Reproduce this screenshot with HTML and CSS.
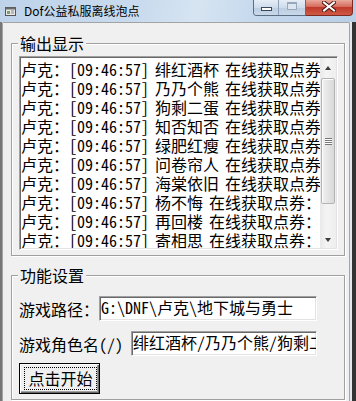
FILE: index.html
```html
<!DOCTYPE html>
<html lang="zh-CN">
<head>
  <meta charset="UTF-8" />
  <meta name="viewport" content="width=device-width, initial-scale=1.0"/>
  <title>Dof公益私服离线泡点</title>
  <link rel="stylesheet" href="styles.css">
</head>
<body>

<div class="window">
  <div class="titlebar">
    <svg class="app-icon" width="11" height="10" viewBox="0 0 11 10">
      <rect x="0.5" y="1.5" width="10" height="8" fill="#e8e8e8" stroke="#555"/>
      <rect x="0.5" y="1.5" width="10" height="2" fill="#6b6b6b"/>
      <rect x="2" y="5" width="3" height="3" fill="#7aa06a"/>
      <path d="M6 5h3M6 7h3" stroke="#888"/>
    </svg>
    <span class="title">Dof公益私服离线泡点</span>
    <div class="caption-buttons">
      <div class="cap-group">
        <div class="cap-btn min"><span class="min-glyph"></span></div>
        <div class="cap-btn max"><span class="max-glyph"></span></div>
      </div>
      <div class="cap-btn close">
        <svg width="14" height="11" viewBox="0 0 14 11">
          <path d="M2 1.5L12 9.5M12 1.5L2 9.5" stroke="#4a1510" stroke-width="4" stroke-linecap="square"/>
          <path d="M2 1.5L12 9.5M12 1.5L2 9.5" stroke="#fff" stroke-width="2" stroke-linecap="square"/>
        </svg>
      </div>
    </div>
  </div>

  <div class="frame">
    <div class="edge-left"></div>
    <div class="client">
      <!-- log output -->
      <fieldset class="group output">
        <legend>输出显示</legend>
        <div class="listbox">
          <div class="list-items">
            <div class="list-item">卢克：[09:46:57] 绯红酒杯 在线获取点券</div>
            <div class="list-item">卢克：[09:46:57] 乃乃个熊 在线获取点券</div>
            <div class="list-item">卢克：[09:46:57] 狗剩二蛋 在线获取点券</div>
            <div class="list-item">卢克：[09:46:57] 知否知否 在线获取点券</div>
            <div class="list-item">卢克：[09:46:57] 绿肥红瘦 在线获取点券</div>
            <div class="list-item">卢克：[09:46:57] 问卷帘人 在线获取点券</div>
            <div class="list-item">卢克：[09:46:57] 海棠依旧 在线获取点券</div>
            <div class="list-item">卢克：[09:46:57] 杨不悔 在线获取点券：</div>
            <div class="list-item">卢克：[09:46:57] 再回楼 在线获取点券：</div>
            <div class="list-item">卢克：[09:46:57] 寄相思 在线获取点券：</div>
          </div>
          <div class="scrollbar">
            <div class="sb-arrow up"></div>
            <div class="sb-track">
              <div class="sb-thumb"><span class="grip"></span></div>
            </div>
            <div class="sb-arrow down"></div>
          </div>
        </div>
      </fieldset>

      <!-- settings -->
      <fieldset class="group settings">
        <legend>功能设置</legend>
        <div class="field-row">
          <label class="field-label path-label">游戏路径：</label>
          <div class="textbox">G:\DNF\卢克\地下城与勇士</div>
        </div>
        <div class="field-row">
          <label class="field-label role-label">游戏角色名(/)</label>
          <div class="textbox">绯红酒杯/乃乃个熊/狗剩二</div>
        </div>
        <button class="start-btn"><span>点击开始</span></button>
      </fieldset>
    </div>
    <div class="edge-right"></div>
  </div>
</div>

</body>
</html>
```

FILE: styles.css
```css
* {
  box-sizing: border-box;
}
body {
  margin: 0;
  width: 356px;
  height: 401px;
  overflow: hidden;
  background: #f0f0f0;
  font-family: "Noto Sans Mono CJK SC", "Noto Sans CJK SC", sans-serif;
  font-size: 16px;
  color: #000;
}
.window {
  width: 356px;
  height: 401px;
  display: flex;
  flex-direction: column;
}

/* title bar */
.titlebar {
  height: 22px;
  flex: none;
  display: flex;
  align-items: flex-start;
  background: linear-gradient(100deg, #bed3ea 0%, #c9dbee 40%, #d6e4f2 55%, #c3d7ec 75%, #b9cfe8 100%);
}
.app-icon {
  margin: 6px 0 0 5px;
  flex: none;
}
.title {
  font-family: "Noto Sans CJK SC", sans-serif;
  font-size: 12px;
  line-height: 22px;
  margin-left: 8px;
  color: #000;
}
.caption-buttons {
  margin-left: auto;
  margin-right: 3px;
  display: flex;
  height: 16px;
}
.cap-group {
  display: flex;
  border: 1px solid #5b6e84;
  border-top: none;
  border-radius: 0 0 0 4px;
  overflow: hidden;
}
.cap-btn {
  height: 100%;
  display: flex;
  align-items: center;
  justify-content: center;
  background: linear-gradient(#e6edf5, #cfdceb 50%, #bccde1 51%, #c9d8e9);
}
.cap-btn.min {
  width: 25px;
  border-right: 1px solid #8da2b9;
}
.cap-btn.max {
  width: 26px;
}
.min-glyph {
  width: 11px;
  height: 4px;
  margin-top: 3px;
  background: #fff;
  border: 1px solid #39475a;
}
.max-glyph {
  width: 10px;
  height: 8px;
  margin-top: -4px;
  border: 1px solid #98a8bb;
  border-top-width: 2px;
  background: #dde6f0;
}
.cap-btn.close {
  width: 47px;
  border: 1px solid #7e2a22;
  border-top: none;
  border-left: none;
  border-radius: 0 0 4px 0;
  background: linear-gradient(#e9a99c, #d56b5c 45%, #c0392b 50%, #cf5a45);
}
.cap-btn.close svg {
  margin-top: -3px;
}

/* window body */
.frame {
  flex: 1;
  min-height: 0;
  display: flex;
}
.edge-left {
  width: 2px;
  flex: none;
  background: #767676;
}
.edge-right {
  width: 6px;
  flex: none;
  background: linear-gradient(to right, #e4e7eb 2px, #333 2px);
}
.client {
  flex: 1;
  min-width: 0;
  overflow: hidden;
  padding: 11px 4px 0 8px;
  border: 1px solid #a3a3a3;
  border-bottom: none;
  border-radius: 2px 2px 0 0;
}

/* group boxes */
.group {
  margin: 0;
  min-width: 0;
  padding: 3px 6px 5px 7px;
  border: 1px solid #a0a0a0;
  box-shadow: inset 1px 1px #fff, 1px 1px #fff;
}
.group legend {
  margin-left: -1px;
  padding: 0 2px;
  line-height: 19px;
  background: #f0f0f0;
}
.settings {
  margin-top: 10px;
  padding-top: 10px;
}

/* list box */
.listbox {
  height: 194px;
  display: flex;
  background: #fff;
  border: 1px solid;
  border-color: #a0a0a0 #fff #fff #a0a0a0;
  box-shadow: inset 1px 1px #696969, inset -1px -1px #e3e3e3;
  padding: 1px;
}
.list-items {
  flex: 1;
  min-width: 0;
  overflow: hidden;
  padding-top: 2px;
}
.list-item {
  line-height: 19px;
  white-space: nowrap;
  word-spacing: -2px;
}
.scrollbar {
  width: 16px;
  flex: none;
  display: flex;
  flex-direction: column;
  background: linear-gradient(to right, #e9e9e9, #f4f4f4 40%, #eeeeee);
}
.sb-arrow {
  height: 17px;
  flex: none;
  position: relative;
}
.sb-arrow::after {
  content: "";
  position: absolute;
  left: 5px;
  border-left: 3.5px solid transparent;
  border-right: 3.5px solid transparent;
}
.sb-arrow.up::after {
  top: 8px;
  border-bottom: 4px solid #3c3c3c;
}
.sb-arrow.down::after {
  top: 7px;
  border-top: 4px solid #3c3c3c;
}
.sb-track {
  flex: 1;
  padding: 3px 1px 0 1px;
}
.sb-thumb {
  height: 126px;
  border: 1px solid #b3b3b3;
  border-radius: 2px;
  background: linear-gradient(to right, #f1f1f1, #e4e4e4 50%, #d9d9d9);
  box-shadow: inset 1px 1px #fcfcfc;
  display: flex;
  align-items: center;
  justify-content: center;
}
.grip {
  width: 7px;
  height: 7px;
  background: repeating-linear-gradient(#777 0 1px, #fff 1px 2px);
}

/* settings rows */
.field-row {
  display: flex;
  align-items: center;
  padding-right: 21px;
  margin-bottom: 9px;
}
.field-label {
  flex: none;
  white-space: nowrap;
  padding-top: 2px;
}
.path-label {
  width: 80px;
}
.role-label {
  width: 112px;
}
.textbox {
  flex: 1;
  min-width: 0;
  height: 25px;
  line-height: 21px;
  padding-left: 1px;
  white-space: nowrap;
  overflow: hidden;
  background: #fff;
  border: 1px solid;
  border-color: #a0a0a0 #fff #fff #a0a0a0;
  box-shadow: inset 1px 1px #696969, inset -1px -1px #e3e3e3;
}
.start-btn {
  display: block;
  width: 81px;
  height: 31px;
  margin-top: -2px;
  padding: 3px 2px 3px 4px;
  font: inherit;
  color: #000;
  background: #f0f0f0;
  border: 1px solid #000;
  box-shadow: inset 1px 1px #fff, inset -1px -1px #696969, inset -2px -2px #a0a0a0;
}
.start-btn span {
  display: block;
  height: 100%;
  line-height: 21px;
  border: 1px dotted #000;
}
```
